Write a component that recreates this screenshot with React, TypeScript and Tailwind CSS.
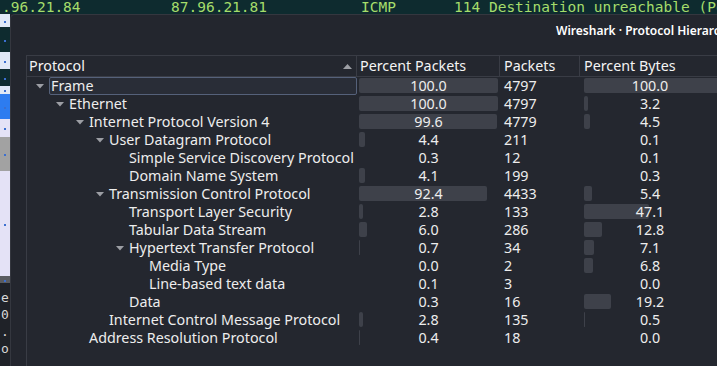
import React from "react";

interface Row {
  name: string;
  level: number;
  open?: boolean;
  pktPct: string;
  packets: number;
  bytePct: string;
}

const rows: Row[] = [
  { name: "Frame", level: 0, open: true, pktPct: "100.0", packets: 4797, bytePct: "100.0" },
  { name: "Ethernet", level: 1, open: true, pktPct: "100.0", packets: 4797, bytePct: "3.2" },
  { name: "Internet Protocol Version 4", level: 2, open: true, pktPct: "99.6", packets: 4779, bytePct: "4.5" },
  { name: "User Datagram Protocol", level: 3, open: true, pktPct: "4.4", packets: 211, bytePct: "0.1" },
  { name: "Simple Service Discovery Protocol", level: 4, pktPct: "0.3", packets: 12, bytePct: "0.1" },
  { name: "Domain Name System", level: 4, pktPct: "4.1", packets: 199, bytePct: "0.3" },
  { name: "Transmission Control Protocol", level: 3, open: true, pktPct: "92.4", packets: 4433, bytePct: "5.4" },
  { name: "Transport Layer Security", level: 4, pktPct: "2.8", packets: 133, bytePct: "47.1" },
  { name: "Tabular Data Stream", level: 4, pktPct: "6.0", packets: 286, bytePct: "12.8" },
  { name: "Hypertext Transfer Protocol", level: 4, open: true, pktPct: "0.7", packets: 34, bytePct: "7.1" },
  { name: "Media Type", level: 5, pktPct: "0.0", packets: 2, bytePct: "6.8" },
  { name: "Line-based text data", level: 5, pktPct: "0.1", packets: 3, bytePct: "0.0" },
  { name: "Data", level: 4, pktPct: "0.3", packets: 16, bytePct: "19.2" },
  { name: "Internet Control Message Protocol", level: 3, pktPct: "2.8", packets: 135, bytePct: "0.5" },
  { name: "Address Resolution Protocol", level: 2, pktPct: "0.4", packets: 18, bytePct: "0.0" },
];

// packet list rows peeking out on the left edge
const strip = [
  { h: 13, c: "bg-[#dfe8f6]" },
  { h: 25, c: "bg-[#0e2b2f]" },
  { h: 17, c: "bg-[#dfe8f6]" },
  { h: 17, c: "bg-[#0e2b2f]" },
  { h: 8, c: "bg-[#dfe8f6]" },
  { h: 25, c: "bg-[#2d7cf0]" },
  { h: 18, c: "bg-[#e4e2f6]" },
  { h: 34, c: "bg-[#a2a2a2]" },
  { h: 105, c: "bg-[#e4e2f6]" },
  { h: 7, c: "bg-[#5a5c60]" },
];

function Bar({ pct }: { pct: string }) {
  const w = Math.round((parseFloat(pct) / 100) * 139);
  return (
    <div className="relative h-full flex items-center justify-center">
      {w > 0 && (
        <div
          className="absolute left-[2px] top-[1px] bottom-[2px] rounded-[2px] bg-[#3e414a]"
          style={{ width: `${w}px` }}
        />
      )}
      <span className="relative">{pct}</span>
    </div>
  );
}

function Arrow() {
  return (
    <svg width="8" height="5" viewBox="0 0 8 5" className="shrink-0">
      <path d="M0 0h8L4 4.5z" fill="#9c9ea4" />
    </svg>
  );
}

export default function App() {
  return (
    <div className="w-[717px] h-[366px] overflow-hidden flex flex-col bg-[#22252d] text-[#ededed] font-['Noto_Sans',sans-serif]">
      <div className="h-[14px] shrink-0 bg-[#0e2b2f] text-[#a5dd6b] font-['DejaVu_Sans_Mono',monospace] text-[14.5px] leading-[14px] whitespace-nowrap flex overflow-hidden">
        <span className="w-[171px] pl-[2px] shrink-0">.96.21.84</span>
        <span className="w-[190px] shrink-0">87.96.21.81</span>
        <span className="w-[93px] shrink-0">ICMP</span>
        <span>114 Destination unreachable (Port unreachable)</span>
      </div>
      <div className="flex flex-1 min-h-0">
        <div className="w-[10px] shrink-0 flex flex-col bg-[#1f2228]">
          {strip.map((s, i) => (
            <div key={i} className={`${s.c} relative`} style={{ height: `${s.h}px` }}>
              <span className="absolute left-[4px] top-1/2 w-[2px] h-[2px] bg-[#3b6fd0]" />
            </div>
          ))}
          <div className="flex flex-col text-[#d8d8d8] font-['DejaVu_Sans_Mono',monospace] text-[13px] leading-[17px] pl-[1px] pt-[6px]">
            <span>e</span>
            <span>0</span>
            <span>.</span>
            <span>o</span>
          </div>
        </div>
        <div className="flex-1 flex flex-col bg-[#23262e] border-l border-t border-[#34373f] rounded-tl-[5px] min-w-0">
          <div className="h-[40px] shrink-0 pt-[7px] pl-[545px] text-[12px] font-semibold text-white whitespace-nowrap overflow-hidden">
            Wireshark · Protocol Hierarchy Statistics
          </div>
          <div className="ml-[15px] flex-1 flex flex-col border-l border-t border-[#393c45] bg-[#24272f] text-[14.3px] min-w-0">
            <div className="flex h-[21px] shrink-0 border-b border-[#393c45] items-center leading-[20px] text-[#f4f4f4]">
              <div className="w-[330px] shrink-0 pl-[2px] flex items-center justify-between pr-[4px] border-r border-[#393c45] h-full">
                <span>Protocol</span>
                <svg width="9" height="5" viewBox="0 0 9 5">
                  <path d="M0 5h9L4.5 0z" fill="#9c9ea4" />
                </svg>
              </div>
              <div className="w-[143px] shrink-0 pl-[3px] border-r border-[#393c45] h-full">Percent Packets</div>
              <div className="w-[80px] shrink-0 pl-[4px] border-r border-[#393c45] h-full">Packets</div>
              <div className="flex-1 pl-[4px] h-full whitespace-nowrap">Percent Bytes</div>
            </div>
            {rows.map((r, i) => (
              <div key={r.name} className="flex h-[18px] shrink-0 leading-[18px]">
                <div className="w-[330px] shrink-0 flex items-center">
                  <div
                    className="flex items-center h-full"
                    style={{ paddingLeft: `${9 + 20 * r.level}px` }}
                  >
                    <div className="w-[13px] flex">{r.open && <Arrow />}</div>
                  </div>
                  <div
                    className={
                      i === 0
                        ? "flex-1 h-[18px] border border-[#55617a] bg-[#292d37] pl-[1px] leading-[16px] rounded-[2px]"
                        : "flex-1 whitespace-nowrap"
                    }
                  >
                    {r.name}
                  </div>
                </div>
                <div className="w-[143px] shrink-0">
                  <Bar pct={r.pktPct} />
                </div>
                <div className="w-[80px] shrink-0 pl-[4px]">{r.packets}</div>
                <div className="w-[138px] shrink-0 pl-[2px]">
                  <Bar pct={r.bytePct} />
                </div>
              </div>
            ))}
          </div>
        </div>
      </div>
    </div>
  );
}
